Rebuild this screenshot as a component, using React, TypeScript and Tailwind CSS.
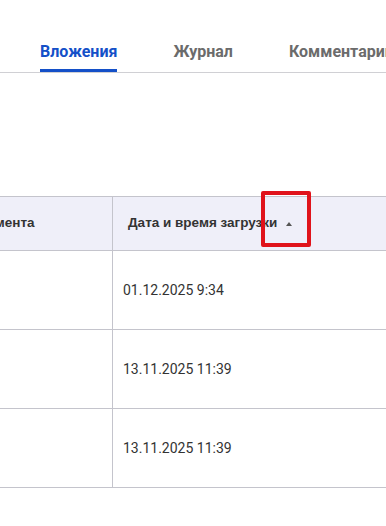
const rows = ['01.12.2025 9:34', '13.11.2025 11:39', '13.11.2025 11:39']

const tabs = [
  { label: 'Вложения', active: true },
  { label: 'Журнал', active: false },
  { label: 'Комментарии', active: false },
]

const App: React.FC = () => {
  return (
    <div className="w-[386px] h-[526px] overflow-hidden bg-white font-['Roboto','Liberation_Sans',sans-serif]">
      <div className="flex gap-14 pl-10 pt-[42px] border-b border-[#d0d0d4] whitespace-nowrap">
        {tabs.map((t) => (
          <div
            key={t.label}
            className={
              t.active
                ? 'pb-[7px] border-b-[3px] border-[#1450c8] text-[16px] font-bold leading-[20px] text-[#1450c8]'
                : 'pb-[10px] text-[16px] font-bold leading-[20px] text-[#6b6b6b]'
            }
          >
            {t.label}
          </div>
        ))}
      </div>

      <div className="mt-[123px] ml-[-76px] w-[560px]">
        <div className="flex h-[55px] bg-[#efeff9] border-y border-[#c4c4cc] font-['Liberation_Sans',Arial,sans-serif]">
          <div className="w-[189px] border-r border-[#c4c4cc] flex items-center pl-[12px] text-[13.5px] font-bold text-[#333]">
            Тип документа
          </div>
          <div className="relative flex-1 flex items-center pl-[15px] text-[13.5px] font-bold text-[#333]">
            Дата и время загрузки
            <span className="ml-[9px] w-0 h-0 border-x-[3px] border-x-transparent border-b-[4px] border-b-[#555]" />
            <div className="absolute left-[148px] top-[-6px] w-[50px] h-[56px] border-[4px] border-[#e0131b] rounded-[2px]" />
          </div>
        </div>
        {rows.map((r, i) => (
          <div key={i} className="flex h-[79px] border-b border-[#c4c4cc]">
            <div className="w-[189px] border-r border-[#c4c4cc]" />
            <div className="flex-1 flex items-center pl-[10px] text-[14px] text-[#333]">{r}</div>
          </div>
        ))}
      </div>
    </div>
  )
}

export default App
